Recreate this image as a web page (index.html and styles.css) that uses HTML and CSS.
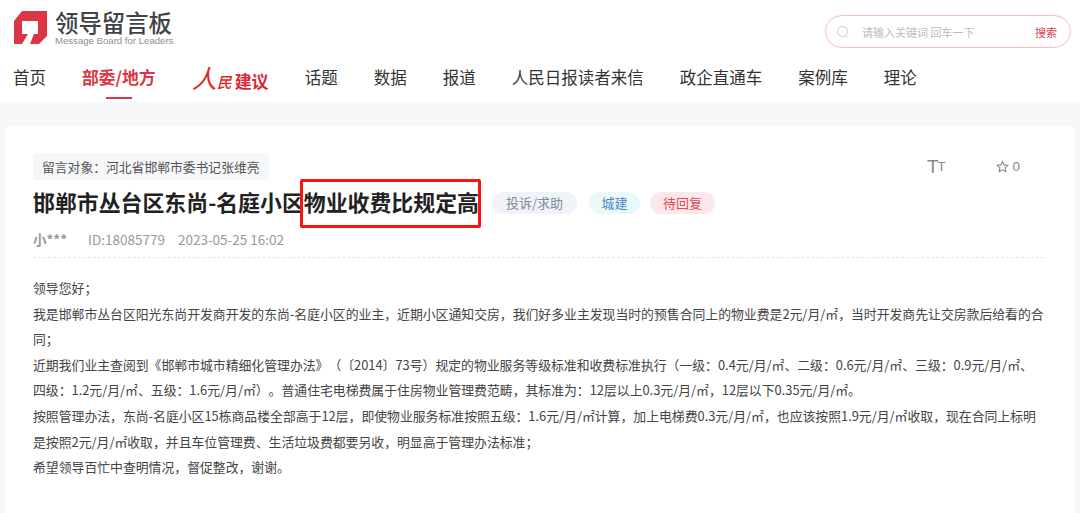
FILE: index.html
```html
<!DOCTYPE html>
<html lang="zh">
<head>
<meta charset="utf-8">
<title>领导留言板</title>
<link rel="stylesheet" href="styles.css">
</head>
<body>
<header class="header">
  <div class="top">
    <div class="logo">
      <svg class="logo-mark" width="34" height="34" viewBox="0 0 34 34"><path fill="#dc3545" d="M0 10 L8 0 H33 V25 L25 33 H16 L20 23 H24 V10 H8 V23 H14 L8 33 H0 Z"/></svg>
      <div class="logo-text">
        <div class="logo-cn">领导留言板</div>
        <div class="logo-en">Message Board for Leaders</div>
      </div>
    </div>
    <div class="search">
      <svg class="search-icon" width="14" height="14" viewBox="0 0 14 14"><circle cx="6.5" cy="6.5" r="5" fill="none" stroke="#ccd" stroke-width="1"/><path d="M10 10.5 L12 12.5" stroke="#ccd" stroke-width="1"/></svg>
      <span class="search-text">请输入关键词 回车一下</span>
      <span class="search-btn">搜索</span>
    </div>
  </div>
  <nav class="nav">
    <a>首页</a>
    <a class="active">部委/地方</a>
    <a class="jianyi"><span class="ren">人</span><span class="min">民</span>建议</a>
    <a>话题</a>
    <a>数据</a>
    <a>报道</a>
    <a>人民日报读者来信</a>
    <a>政企直通车</a>
    <a>案例库</a>
    <a>理论</a>
  </nav>
</header>
<main class="card">
  <div class="head-row">
    <div class="target">留言对象：河北省邯郸市委书记张维亮</div>
    <div class="tools">
      <span class="tt"><span class="tt-b">T</span><span class="tt-s">T</span></span>
      <span class="fav">
        <svg width="13" height="13" viewBox="0 0 24 24"><path fill="none" stroke="#888" stroke-width="2" d="M12 2.5 L15 9 L22 9.8 L16.8 14.5 L18.2 21.5 L12 18 L5.8 21.5 L7.2 14.5 L2 9.8 L9 9 Z"/></svg>
        <span>0</span>
      </span>
    </div>
  </div>
  <div class="title-row">
    <h1 class="title">邯郸市丛台区东尚-名庭小区<span class="mark">物业收费比规定高</span></h1>
    <span class="tag tag-gray">投诉/求助</span>
    <span class="tag tag-blue">城建</span>
    <span class="tag tag-red">待回复</span>
  </div>
  <div class="meta">
    <span class="author">小***</span>
    <span class="id">ID:18085779</span>
    <span>2023-05-25 16:02</span>
  </div>
  <article class="content">
    <p>领导您好；</p>
    <p>我是邯郸市丛台区阳光东尚开发商开发的东尚-名庭小区的业主，近期小区通知交房，我们好多业主发现当时的预售合同上的物业费是2元/月/㎡，当时开发商先让交房款后给看的合同；</p>
    <p>近期我们业主查阅到《邯郸市城市精细化管理办法》（〔2014〕73号）规定的物业服务等级标准和收费标准执行（一级：0.4元/月/㎡、二级：0.6元/月/㎡、三级：0.9元/月/㎡、四级：1.2元/月/㎡、五级：1.6元/月/㎡）。普通住宅电梯费属于住房物业管理费范畴，其标准为：12层以上0.3元/月/㎡，12层以下0.35元/月/㎡。</p>
    <p>按照管理办法，东尚-名庭小区15栋商品楼全部高于12层，即使物业服务标准按照五级：1.6元/月/㎡计算，加上电梯费0.3元/月/㎡，也应该按照1.9元/月/㎡收取，现在合同上标明是按照2元/月/㎡收取，并且车位管理费、生活垃圾费都要另收，明显高于管理办法标准；</p>
    <p>希望领导百忙中查明情况，督促整改，谢谢。</p>
  </article>
</main>
</body>
</html>
```
FILE: styles.css
```css
* { box-sizing: border-box; }
html, body { height: 100%; }
body {
  margin: 0;
  height: 513px;
  overflow: hidden;
  background: #f6f7f9;
  font-family: "Noto Sans CJK SC", "Liberation Sans", sans-serif;
  color: #333;
  text-spacing-trim: space-all;
  font-feature-settings: "palt" 0, "chws" 0;
}
.header { background: #fff; height: 102px; }
.top {
  display: flex;
  justify-content: space-between;
  padding: 11px 9px 0 14px;
  height: 65px;
}
.logo { display: flex; gap: 7px; height: 34px; }
.logo-text { margin-top: -1px; }
.logo-cn {
  font-size: 23.4px;
  line-height: 24px;
  color: #3f4348;
  font-weight: 500;
}
.logo-en {
  font-family: "Liberation Sans", sans-serif;
  font-size: 9.6px;
  line-height: 11px;
  color: #8b8f94;
  margin-top: 1px;
}
.search {
  display: flex;
  align-items: center;
  width: 246px;
  height: 33px;
  margin-top: 4px;
  border: 1px solid #fbb9bf;
  border-radius: 17px;
  padding: 0 13px 0 10px;
  font-size: 11px;
}
.search-icon { margin-right: 12px; }
.search-text { flex: 1; color: #bcbcbc; }
.search-btn { color: #d9404e; }
.nav {
  display: flex;
  gap: 36px;
  padding-left: 13px;
  font-size: 16.5px;
  line-height: 24px;
  color: #333;
}
.nav a { position: relative; height: 37px; display: block; white-space: nowrap; }
.nav .active { color: #dc3545; font-weight: 700; font-size: 16.8px; }
.active::after {
  content: "";
  position: absolute;
  left: 24px;
  bottom: 3px;
  width: 26px;
  height: 2px;
  background: #dc3545;
}
.nav .jianyi { color: #d92b35; font-weight: 700; font-size: 17px; }
.ren, .min {
  display: inline-block;
  font-style: italic;
  color: #dc2a2a;
}
.ren { width: 25px; font-size: 25px; font-weight: 400; line-height: 24px; }
.min { width: 18px; font-size: 15px; font-weight: 500; line-height: 24px; }
.card {
  margin: 24px 5px 0;
  height: 400px;
  padding: 27px 31px 0 28px;
  background: #fff;
  border-radius: 8px;
}
.head-row { display: flex; justify-content: space-between; height: 27px; }
.target {
  background: #f6f7f9;
  border-radius: 2px;
  padding: 0 9px;
  font-size: 12.8px;
  line-height: 27px;
  color: #555;
}
.tools { display: flex; align-items: center; gap: 51px; padding-right: 24px; color: #888; font-size: 13px; }
.tt { display: flex; align-items: flex-end; color: #888; font-family: "Liberation Sans", sans-serif; line-height: 16px; font-weight: 300; }
.tt-b { font-size: 19px; }
.tt-s { font-size: 13px; margin-left: -1px; }
.fav { display: flex; align-items: center; gap: 3px; font-family: "Liberation Sans", sans-serif; font-size: 13.5px; }
.title-row { display: flex; align-items: center; height: 44px; }
.title {
  margin: 0 13px 0 0;
  font-size: 21.9px;
  line-height: 44px;
  font-weight: 700;
  color: #222;
  white-space: nowrap;
}
.mark { position: relative; }
.mark::after {
  content: "";
  position: absolute;
  left: -4px;
  right: -2px;
  top: -7px;
  bottom: -11px;
  border: 3px solid #f5140f;
  border-radius: 2px;
}
.tag {
  margin-top: 2px;
  margin-right: 10px;
  height: 22px;
  padding: 0 13px;
  border-radius: 11px;
  font-size: 13px;
  line-height: 22px;
  white-space: nowrap;
}
.tag-gray { background: #f0f3f8; color: #7f8a9c; padding: 0 14px; margin-right: 12px; }
.tag-blue { background: #e9f9f8; color: #4f86c6; padding: 0 12.5px; }
.tag-red { background: #fce8ea; color: #dc4a5a; }
.meta {
  display: flex;
  margin-top: 5px;
  height: 29px;
  border-bottom: 1px dashed #e4e4e4;
  font-size: 13.5px;
  line-height: 20px;
  color: #999;
}
.author { font-weight: 700; width: 55px; }
.id { margin-right: 13px; }
.content { padding-top: 17px; font-size: 12.85px; line-height: 25.6px; color: #444; }
.content p { margin: 0; }
```
